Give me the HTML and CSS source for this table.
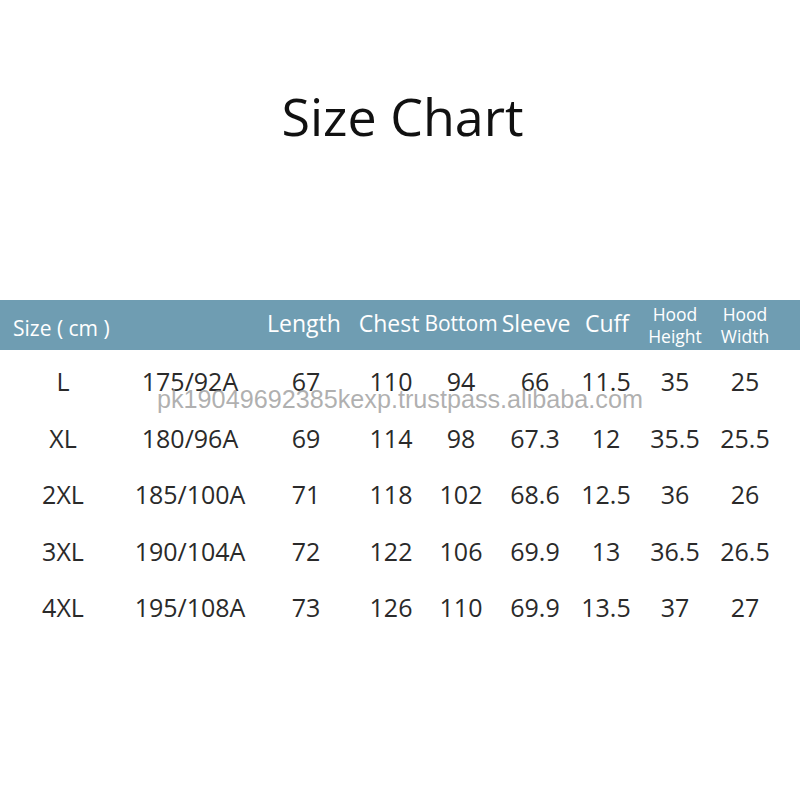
FILE: index.html
```html
<!DOCTYPE html>
<html>
<head>
<meta charset="utf-8">
<link rel="stylesheet" href="styles.css">
</head>
<body>
<div class="page">
  <h1 class="title">Size Chart</h1>
  <div class="bar">
    <div class="hcell size-label">Size ( cm )</div>
    <div class="hcell big">Length</div>
    <div class="hcell big">Chest</div>
    <div class="hcell mid">Bottom</div>
    <div class="hcell big">Sleeve</div>
    <div class="hcell big">Cuff</div>
    <div class="hcell small">Hood<br>Height</div>
    <div class="hcell small">Hood<br>Width</div>
  </div>
  <div class="rows">
    <div class="row"><span>L</span><span>175/92A</span><span>67</span><span>110</span><span>94</span><span>66</span><span>11.5</span><span>35</span><span>25</span></div>
    <div class="row"><span>XL</span><span>180/96A</span><span>69</span><span>114</span><span>98</span><span>67.3</span><span>12</span><span>35.5</span><span>25.5</span></div>
    <div class="row"><span>2XL</span><span>185/100A</span><span>71</span><span>118</span><span>102</span><span>68.6</span><span>12.5</span><span>36</span><span>26</span></div>
    <div class="row"><span>3XL</span><span>190/104A</span><span>72</span><span>122</span><span>106</span><span>69.9</span><span>13</span><span>36.5</span><span>26.5</span></div>
    <div class="row"><span>4XL</span><span>195/108A</span><span>73</span><span>126</span><span>110</span><span>69.9</span><span>13.5</span><span>37</span><span>27</span></div>
    <div class="watermark">pk19049692385kexp.trustpass.alibaba.com</div>
  </div>
</div>
</body>
</html>
```

FILE: styles.css
```css
html, body {
  margin: 0;
  padding: 0;
  background: #ffffff;
}
.page {
  width: 800px;
  height: 800px;
  display: flex;
  flex-direction: column;
  font-family: "Open Sans", "Noto Sans", sans-serif;
  color: #2a2a2a;
}
.title {
  margin: 80px 0 0 0;
  height: 72px;
  line-height: 72px;
  text-align: center;
  font-size: 52px;
  font-weight: 400;
  color: #111111;
  padding-left: 5px;
}
.bar {
  margin-top: 148px;
  height: 50px;
  background: #6f9db2;
  color: #ffffff;
  display: grid;
  grid-template-columns: 254px 100px 70px 74px 76px 66px 70px 70px 20px;
  align-items: center;
}
.hcell {
  text-align: center;
  white-space: nowrap;
}
.size-label {
  text-align: left;
  padding-left: 13px;
  font-size: 21px;
  margin-top: 6px;
}
.big {
  font-size: 23px;
  margin-top: -4px;
}
.mid {
  font-size: 21px;
  margin-top: -4px;
}
.small {
  font-size: 17.5px;
  line-height: 22px;
  margin-top: 0px;
}
.rows {
  position: relative;
  padding-top: 3px;
  display: flex;
  flex-direction: column;
}
.row {
  display: grid;
  grid-template-columns: 126px 128px 104px 66px 74px 74px 68px 70px 70px;
  height: 56.5px;
  align-items: center;
  font-size: 25px;
}
.row span {
  text-align: center;
  white-space: nowrap;
}
.watermark {
  position: absolute;
  left: 157px;
  top: 35px;
  font-family: "Liberation Sans", Arial, sans-serif;
  font-size: 25.2px;
  color: rgba(150, 150, 150, 0.75);
  white-space: nowrap;
}
```
